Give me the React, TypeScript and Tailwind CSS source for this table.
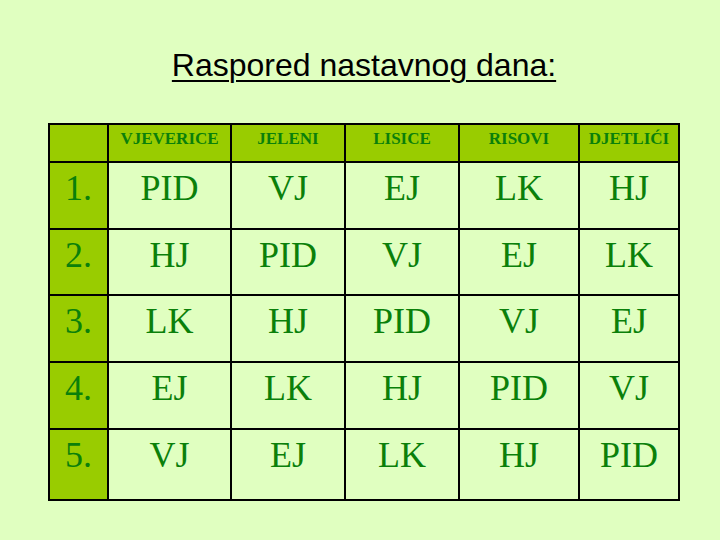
import React from 'react';

const groups = ['VJEVERICE', 'JELENI', 'LISICE', 'RISOVI', 'DJETLIĆI'];

const rows = [
  ['PID', 'VJ', 'EJ', 'LK', 'HJ'],
  ['HJ', 'PID', 'VJ', 'EJ', 'LK'],
  ['LK', 'HJ', 'PID', 'VJ', 'EJ'],
  ['EJ', 'LK', 'HJ', 'PID', 'VJ'],
  ['VJ', 'EJ', 'LK', 'HJ', 'PID'],
];

const serif = { fontFamily: '"Liberation Serif", "Times New Roman", serif' };

const App = () => {
  return (
    <div className="w-[720px] h-[540px] bg-[#e0ffc0] flex flex-col items-center pt-[49px]">
      <h1
        className="text-[32px] leading-8 text-black underline decoration-2 underline-offset-[4px] pl-[8px]"
        style={{ fontFamily: '"Liberation Sans", Arial, sans-serif' }}
      >
        Raspored nastavnog dana:
      </h1>

      {/* raspored */}
      <div
        className="mt-[42px] ml-[8px] grid grid-cols-[57px_121px_112px_112px_118px_98px] grid-rows-[36px_65px_64px_65px_65px_69px] gap-[2px] p-[2px] bg-black text-[#0a800a]"
        style={serif}
      >
        <div className="bg-[#99cc00]" />
        {groups.map((g) => (
          <div
            key={g}
            className="bg-[#99cc00] text-center font-bold text-[17px] leading-[17px] pt-[5px]"
          >
            {g}
          </div>
        ))}

        {rows.map((row, i) => (
          <React.Fragment key={i}>
            <div className="bg-[#99cc00] text-center text-[36px] leading-9 pt-[7px]">
              {i + 1}.
            </div>
            {row.map((c, j) => (
              <div
                key={j}
                className="bg-[#e0ffc0] text-center text-[36px] leading-9 pt-[7px]"
              >
                {c}
              </div>
            ))}
          </React.Fragment>
        ))}
      </div>
    </div>
  );
};

export default App;
